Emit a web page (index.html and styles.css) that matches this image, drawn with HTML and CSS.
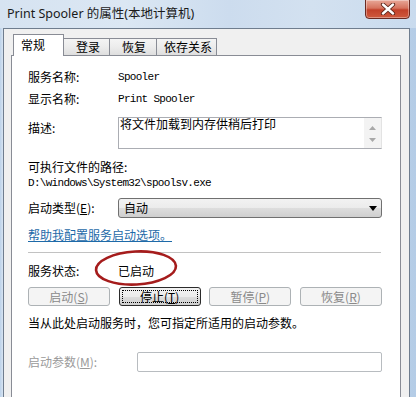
FILE: index.html
```html
<!DOCTYPE html>
<html>
<head>
<meta charset="utf-8">
<link rel="stylesheet" href="styles.css">
</head>
<body>
<div class="win">
  <div class="titlebar">
    <span class="title">Print Spooler 的属性(本地计算机)</span>
    <div class="close">
      <svg width="16" height="12" viewBox="0 0 16 12"><path d="M3 1.5 L13 10.5 M13 1.5 L3 10.5" stroke="#5a2418" stroke-width="4.2" stroke-linecap="round"/><path d="M3 1.5 L13 10.5 M13 1.5 L3 10.5" stroke="#ffffff" stroke-width="2.4" stroke-linecap="round"/></svg>
    </div>
  </div>
  <div class="frame">
    <div class="client">
      <div class="tabs">
        <div class="tab active">常规</div>
        <div class="tab t2">登录</div>
        <div class="tab t3">恢复</div>
        <div class="tab t4">依存关系</div>
      </div>
      <div class="panel">
        <div class="row r1"><span class="lbl">服务名称:</span><span class="mono">Spooler</span></div>
        <div class="row r2"><span class="lbl">显示名称:</span><span class="mono">Print Spooler</span></div>
        <div class="row desc">
          <span class="lbl desc-lbl">描述:</span>
          <div class="textarea">
            <span class="ta-text">将文件加载到内存供稍后打印</span>
            <div class="vscroll">
              <svg width="7" height="4" viewBox="0 0 7 4"><path d="M0 4 L3.5 0 L7 4 Z" fill="#a8a8a8"/></svg>
              <svg width="7" height="4" viewBox="0 0 7 4"><path d="M0 0 L3.5 4 L7 0 Z" fill="#a8a8a8"/></svg>
            </div>
          </div>
        </div>
        <div class="row pathlbl">可执行文件的路径:</div>
        <div class="row path mono">D:\windows\System32\spoolsv.exe</div>
        <div class="row type">
          <span class="lbl">启动类型(<u>E</u>):</span>
          <div class="select"><span>自动</span>
            <svg width="8" height="5" viewBox="0 0 8 5"><path d="M0 0 L8 0 L4 5 Z" fill="#000"/></svg>
          </div>
        </div>
        <div class="row link">帮助我配置服务启动选项。</div>
        <div class="sep"></div>
        <div class="row status">
          <span class="lbl">服务状态:</span><span class="state">已启动</span>
          <svg class="circle" width="86" height="40" viewBox="0 0 86 40"><ellipse cx="43" cy="20" rx="40" ry="16.5" fill="none" stroke="#a51c1c" stroke-width="2.6" transform="rotate(-3 43 20)"/></svg>
        </div>
        <div class="btns">
          <div class="btn disabled">启动(<u>S</u>)</div>
          <div class="btn focus"><span class="fr">停止(<u>T</u>)</span></div>
          <div class="btn disabled">暂停(<u>P</u>)</div>
          <div class="btn disabled">恢复(<u>R</u>)</div>
        </div>
        <div class="row note">当从此处启动服务时，您可指定所适用的启动参数。</div>
        <div class="row param">
          <span class="lbl plbl">启动参数(<u>M</u>):</span>
          <div class="input"></div>
        </div>
      </div>
    </div>
  </div>
</div>
</body>
</html>
```
FILE: styles.css
```css
html, body {
  margin: 0;
  padding: 0;
}
body {
  width: 416px;
  height: 397px;
  overflow: hidden;
  font-family: "Noto Sans CJK SC", "Noto Sans", sans-serif;
  font-size: 12px;
  color: #000;
}
.win {
  width: 416px;
  height: 397px;
  display: flex;
  flex-direction: column;
  overflow: hidden;
  background: linear-gradient(to right, #bcd2ea 0px, #d7e4f2 3px, #e6eef7 50%, #b4cce6 100%);
}
.titlebar {
  height: 28px;
  position: relative;
  flex: none;
  background: linear-gradient(to right, #d6e3f1 0%, #dbe7f3 30%, #ccdcee 55%, #d3e1f0 75%, #c9dbee 100%);
}
.title {
  position: absolute;
  left: 7px;
  top: 6px;
  line-height: 16px;
  font-family: "Noto Sans", "Noto Sans CJK SC", sans-serif;
  font-size: 12.5px;
  color: #1a1a1a;
}
.close {
  position: absolute;
  left: 365px;
  top: -1px;
  width: 43px;
  height: 18px;
  border: 1px solid #6a2a22;
  border-radius: 0 0 4px 4px;
  background: linear-gradient(to bottom, #e8a898 0%, #d6735e 45%, #c2412a 55%, #cf5a3e 100%);
  display: flex;
  align-items: center;
  justify-content: center;
  box-shadow: inset 0 0 0 1px rgba(255,255,255,0.35);
}
.frame {
  flex: 1;
  display: flex;
  min-height: 0;
}
.client {
  margin-left: 3px;
  width: 407px;
  border: 1px solid #6f7d8e;
  border-bottom: none;
  background: #f0f0f0;
  padding: 5px 8px 0 7px;
  box-sizing: border-box;
  overflow: hidden;
  display: flex;
  flex-direction: column;
}
.tabs {
  display: flex;
  align-items: flex-end;
  height: 21px;
  flex: none;
  padding-left: 2px;
  position: relative;
  z-index: 1;
}
.tab {
  height: 17px;
  box-sizing: border-box;
  border: 1px solid #898c95;
  border-bottom: none;
  border-left: none;
  background: linear-gradient(to bottom, #f4f4f4 0%, #ececec 50%, #dedede 100%);
  display: flex;
  align-items: center;
  padding-left: 12px;
  line-height: 14px;
  font-size: 12px;
}
.tab.active {
  height: 22px;
  width: 51px;
  margin-bottom: -1px;
  background: #fff;
  border-left: 1px solid #898c95;
  padding-left: 7px;
  padding-bottom: 2px;
}
.t2 { width: 46px; }
.t3 { width: 47px; }
.t4 { width: 60px; padding-left: 7px; }
.panel {
  flex: 1;
  min-height: 0;
  border: 1px solid #898c95;
  border-bottom: none;
  background: #fff;
  padding: 0 18px 0 16px;
}
.row {
  display: flex;
  align-items: center;
  height: 16px;
  line-height: 16px;
  white-space: nowrap;
}
.lbl {
  width: 90px;
  flex: none;
}
.mono {
  font-family: "Liberation Mono", monospace;
  font-size: 11px;
  letter-spacing: -0.7px;
}
.r1 { margin-top: 13px; }
.r2 { margin-top: 6px; }
.desc {
  margin-top: 10px;
  height: 32px;
  align-items: flex-start;
}
.desc-lbl {
  padding-top: 3px;
}
.textarea {
  width: 266px;
  height: 32px;
  box-sizing: border-box;
  border: 1px solid #abadb3;
  border-right-color: #e3e3e3;
  display: flex;
  justify-content: space-between;
}
.ta-text {
  line-height: 12px;
  padding-left: 1px;
}
.vscroll {
  width: 17px;
  background: #f3f3f3;
  display: flex;
  flex-direction: column;
  align-items: center;
  justify-content: space-around;
  padding: 4px 0 2px;
}
.pathlbl { margin-top: 10px; }
.path { height: 16px; }
.type {
  margin-top: 7px;
  height: 20px;
}
.select {
  width: 266px;
  height: 20px;
  box-sizing: border-box;
  border: 1px solid #707070;
  border-radius: 3px;
  background: linear-gradient(to bottom, #f2f2f2 0%, #ebebeb 50%, #dddddd 51%, #cfcfcf 100%);
  display: flex;
  align-items: center;
  justify-content: space-between;
  padding: 0 4px 0 5px;
}
.link {
  margin-top: 9px;
  color: #1e6aa8;
  text-decoration: underline;
}
.sep {
  margin-top: 9px;
  height: 1px;
  width: 353px;
  background: #c2c2c2;
}
.status {
  margin-top: 10px;
  position: relative;
}
.circle {
  position: absolute;
  left: 65px;
  top: -15px;
}
.btns {
  margin-top: 8px;
  height: 19px;
  display: flex;
  justify-content: space-between;
}
.btn {
  width: 82px;
  height: 19px;
  box-sizing: border-box;
  border: 1px solid #707070;
  border-radius: 3px;
  background: linear-gradient(to bottom, #f2f2f2 0%, #ebebeb 50%, #dddddd 51%, #cfcfcf 100%);
  display: flex;
  align-items: center;
  justify-content: center;
  line-height: 14px;
}
.btn.disabled {
  border-color: #adb2b5;
  background: #f4f4f4;
  color: #8a8a8a;
}
.btn.focus {
  border-color: #2b2b2b;
  padding: 2px;
}
.fr {
  flex: 1;
  align-self: stretch;
  border: 1px dotted #000;
  display: flex;
  align-items: center;
  justify-content: center;
}
.note { margin-top: 9px; }
.param {
  margin-top: 21px;
  height: 20px;
}
.plbl {
  width: 109px;
  color: #9a9a9a;
}
.input {
  width: 247px;
  height: 20px;
  box-sizing: border-box;
  border: 1px solid #b8bcc0;
  border-radius: 2px;
  background: #fff;
}
```
